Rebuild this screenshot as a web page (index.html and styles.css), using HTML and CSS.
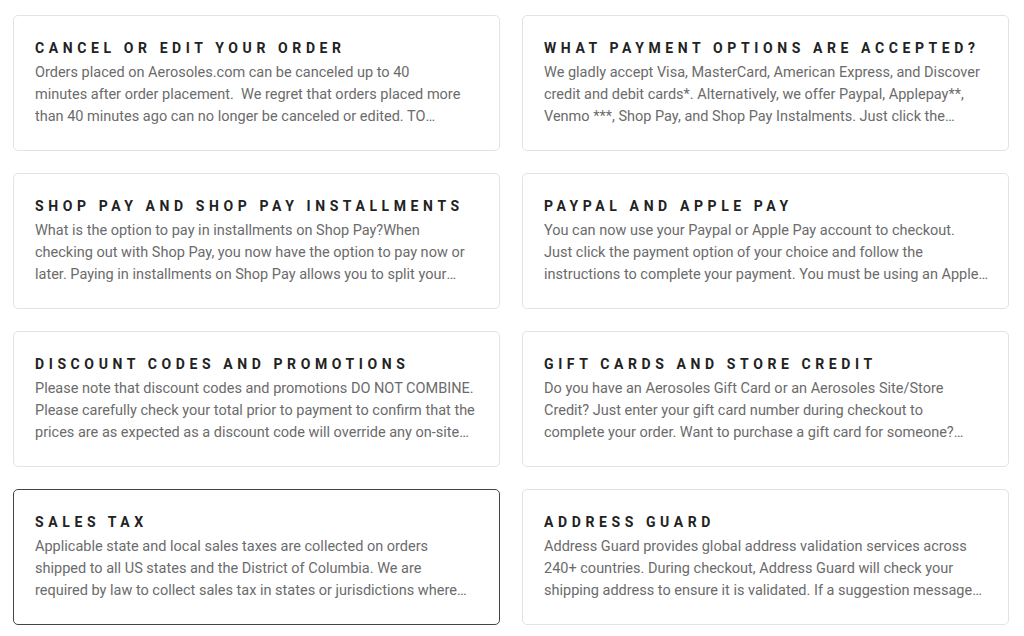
FILE: index.html
```html
<!DOCTYPE html>
<html lang="en">
<head>
<meta charset="utf-8">
<title>FAQ</title>
<link rel="stylesheet" href="styles.css">
</head>
<body>
<main class="faq-grid">
  <article class="faq-card">
    <h3 class="faq-title">Cancel or edit your order</h3>
    <p class="faq-text">Orders placed on Aerosoles.com can be canceled up to 40<br>minutes after order placement.&nbsp; We regret that orders placed more<br>than 40 minutes ago can no longer be canceled or edited. TO CANCEL YOUR ORDER please contact our customer service team as soon as possible.</p>
  </article>
  <article class="faq-card">
    <h3 class="faq-title">What payment options are accepted?</h3>
    <p class="faq-text">We gladly accept Visa, MasterCard, American Express, and Discover<br>credit and debit cards*. Alternatively, we offer Paypal, Applepay**,<br>Venmo ***, Shop Pay, and Shop Pay Instalments. Just click the payment option of your choice at checkout.</p>
  </article>
  <article class="faq-card">
    <h3 class="faq-title">Shop Pay and Shop Pay Installments</h3>
    <p class="faq-text">What is the option to pay in installments on Shop Pay?When<br>checking out with Shop Pay, you now have the option to pay now or<br>later. Paying in installments on Shop Pay allows you to split your purchase into four interest-free payments.</p>
  </article>
  <article class="faq-card">
    <h3 class="faq-title">Paypal and Apple Pay</h3>
    <p class="faq-text">You can now use your Paypal or Apple Pay account to checkout.<br>Just click the payment option of your choice and follow the<br>instructions to complete your payment. You must be using an Apple device to use Apple Pay.</p>
  </article>
  <article class="faq-card">
    <h3 class="faq-title">Discount codes and promotions</h3>
    <p class="faq-text">Please note that discount codes and promotions DO NOT COMBINE.<br>Please carefully check your total prior to payment to confirm that the<br>prices are as expected as a discount code will override any on-site promotions.</p>
  </article>
  <article class="faq-card">
    <h3 class="faq-title">Gift cards and store credit</h3>
    <p class="faq-text">Do you have an Aerosoles Gift Card or an Aerosoles Site/Store<br>Credit? Just enter your gift card number during checkout to<br>complete your order. Want to purchase a gift card for someone? Purchase one on our gift card page.</p>
  </article>
  <article class="faq-card is-active">
    <h3 class="faq-title">Sales tax</h3>
    <p class="faq-text">Applicable state and local sales taxes are collected on orders<br>shipped to all US states and the District of Columbia. We are<br>required by law to collect sales tax in states or jurisdictions where applicable.</p>
  </article>
  <article class="faq-card">
    <h3 class="faq-title">Address Guard</h3>
    <p class="faq-text">Address Guard provides global address validation services across<br>240+ countries. During checkout, Address Guard will check your<br>shipping address to ensure it is validated. If a suggestion message appears, please review your address.</p>
  </article>
</main>
</body>
</html>
```

FILE: styles.css
```css
html, body {
  margin: 0;
  padding: 0;
  background: #ffffff;
}

body {
  font-family: Roboto, "Liberation Sans", Arial, sans-serif;
}

.faq-grid {
  display: grid;
  grid-template-columns: 487px 487px;
  column-gap: 22px;
  row-gap: 22px;
  padding: 15px 16px 0 13px;
}

.faq-card {
  box-sizing: border-box;
  height: 136px;
  border: 1px solid #e3e3e3;
  border-radius: 5px;
  padding: 22px 16px 0 21px;
  background: #fff;
}

.faq-card.is-active {
  border-color: #444;
}

.faq-title {
  margin: 0 0 4px 0;
  font-size: 14px;
  line-height: 20px;
  font-weight: 700;
  text-transform: uppercase;
  letter-spacing: 4.6px;
  color: #222;
}

.faq-text {
  margin: 0;
  font-size: 14.5px;
  line-height: 22px;
  color: #6b6b6b;
  display: -webkit-box;
  -webkit-line-clamp: 3;
  -webkit-box-orient: vertical;
  overflow: hidden;
}
```
